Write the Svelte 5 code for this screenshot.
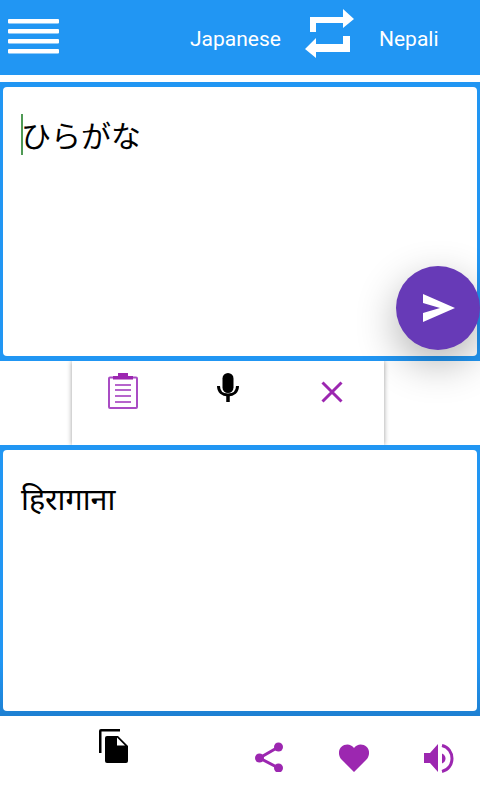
<script>
  let source = $state('ひらがな');
  let target = $state('हिरागाना');
</script>

<div class="screen">
  <header class="topbar">
    <button class="menu" aria-label="Menu">
      <svg width="51" height="35" viewBox="0 0 51 35"><g fill="#fff"><rect y="0" width="51" height="4.500" rx="1"/><rect y="10" width="51" height="4.500" rx="1"/><rect y="20" width="51" height="4.500" rx="1"/><rect y="30" width="51" height="4.500" rx="1"/></g></svg>
    </button>
    <span class="lang from">Japanese</span>
    <svg class="swap" width="50" height="50" viewBox="0 0 50 50"><g fill="#fff"><path d="M5 8H38V0L49 10 38 19V14H11V23H5Z"/><path d="M38 27h7V43H11v6L0 40 11 29v6H38Z"/></g></svg>
    <span class="lang to">Nepali</span>
  </header>

  <section class="panel first">
    <div class="card">
      <div class="input"><i class="caret"></i>{source}</div>
    </div>
    <button class="fab" aria-label="Translate">
      <svg width="32" height="28" viewBox="0 0 32 28"><path fill="#fff" d="M0 0L32 14 0 28V19L17 14 0 9Z"/></svg>
    </button>
  </section>

  <div class="tools-row">
    <div class="tools">
      <svg class="clip" width="30" height="36" viewBox="0 0 30 36"><rect x="1" y="4.500" width="28" height="30.500" rx="1" fill="none" stroke="#a94cc4" stroke-width="2"/><path fill="#9c27b0" d="M5 6.500V3h5V0h10v3h5v3.500z"/><g fill="#b665cc"><rect x="7" y="11" width="16" height="2"/><rect x="7" y="16" width="16" height="2"/><rect x="7" y="22" width="16" height="2"/><rect x="7" y="28" width="16" height="2"/></g></svg>
      <svg class="mic" width="24" height="30" viewBox="0 0 24 30"><rect x="6.500" y="0" width="11" height="20" rx="5.500" fill="#000"/><path d="M2.500 13c0 6 4 9 9.500 9s9.500-3 9.500-9" fill="none" stroke="#000" stroke-width="3"/><rect x="10.250" y="22" width="3.500" height="7" fill="#000"/></svg>
      <svg class="close" width="22" height="22" viewBox="0 0 22 22"><path d="M1.500 1.500l19 19M20.500 1.500l-19 19" stroke="#9c27b0" stroke-width="3" fill="none"/></svg>
    </div>
  </div>

  <section class="panel second">
    <div class="card">
      <div class="output">{target}</div>
    </div>
  </section>

  <footer class="actions">
    <svg class="copy" width="29" height="34" viewBox="0 0 29 34"><path d="M0 24V2a2 2 0 0 1 2-2h19v2.500H2.500V24z" fill="#000"/><path d="M8 7h11l10 10v15a2 2 0 0 1-2 2H8a2 2 0 0 1-2-2V9a2 2 0 0 1 2-2z" fill="#000"/><path d="M18 8.500v8h8z" fill="#fff"/></svg>
    <svg class="share" width="28" height="30" viewBox="0 0 28 30"><g fill="#9c27b0"><circle cx="23.500" cy="5" r="4.500"/><circle cx="4.500" cy="16" r="4.500"/><circle cx="23.500" cy="26" r="4.500"/></g><path d="M23.500 5L4.500 16 23.500 26" fill="none" stroke="#9c27b0" stroke-width="3"/></svg>
    <svg class="heart" width="30" height="28" viewBox="0 0 30 28"><path fill="#9c27b0" d="M15 28L3 16C-1 12-1 6 2.500 2.800 6-.6 12-.5 15 4c3-4.500 9-4.600 12.500-1.200C31 6 31 12 27 16z"/></svg>
    <svg class="speaker" width="30" height="29" viewBox="0 0 30 29"><path fill="#9c27b0" d="M0 9h6l8-9v28l-8-9H0z"/><path d="M18 9.500c2.500 1 3.500 3 3.500 5s-1 4-3.500 5z" fill="#9c27b0"/><path d="M18 1.500c6.500 1.500 10 7 10 13s-3.500 11.500-10 13" fill="none" stroke="#9c27b0" stroke-width="3"/></svg>
  </footer>
</div>

<style>
  :global(body) {
    margin: 0;
    background: #fff;
  }

  .screen {
    width: 480px;
    height: 800px;
    display: flex;
    flex-direction: column;
    overflow: hidden;
    background: #fff;
    font-family: Roboto, "Noto Sans", "Noto Sans CJK JP", sans-serif;
  }

  .topbar {
    height: 75px;
    flex: none;
    box-sizing: border-box;
    background: #2196f3;
    display: flex;
    align-items: flex-start;
    color: #fff;
    font-size: 21px;
  }

  .menu {
    border: 0;
    padding: 0;
    background: none;
    margin-left: 8px;
    margin-top: 19px;
    display: flex;
  }

  .lang {
    margin-top: 27px;
  }

  .from {
    margin-left: 131px;
    width: 115px;
  }

  .swap {
    margin-left: 0;
    margin-top: 9px;
  }

  .to {
    margin-left: 24px;
  }

  .panel {
    flex: none;
    box-sizing: border-box;
    padding: 5px 3px;
    background: #2196f3;
    display: flex;
    position: relative;
  }

  .first {
    margin-top: 7px;
    height: 279px;
  }

  .second {
    height: 271px;
    background: linear-gradient(#2196f3 80%, #1e80d2);
  }

  .card {
    flex: 1;
    background: #fff;
    border-radius: 4px;
  }

  .input {
    padding: 27px 0 0 18px;
    font-size: 30px;
    line-height: 41px;
    color: #000;
    font-family: "Noto Sans CJK JP", sans-serif;
    display: flex;
    position: relative;
  }

  .caret {
    width: 2px;
    height: 41px;
    background: #4f9a55;
    margin-right: -2px;
  }

  .output {
    padding: 28px 0 0 18px;
    font-size: 30.500px;
    line-height: 40px;
    color: #000;
    font-family: "Noto Sans", "Noto Sans Devanagari", sans-serif;
  }

  .fab {
    position: absolute;
    left: 396px;
    top: 184px;
    width: 84px;
    height: 84px;
    padding: 0 0 0 2px;
    border: 0;
    border-radius: 50%;
    background: #673ab7;
    box-shadow: 0 14px 40px rgba(0, 0, 0, 0.3);
    display: flex;
    align-items: center;
    justify-content: center;
    z-index: 2;
  }

  .tools-row {
    height: 84px;
    flex: none;
    padding-left: 72px;
  }

  .tools {
    width: 312px;
    height: 84px;
    background: #fff;
    box-shadow: 0 0 5px rgba(0, 0, 0, 0.4);
    position: relative;
    z-index: 3;
    display: grid;
    grid-template-columns: 104px 104px 104px;
    justify-items: center;
    align-items: start;
    clip-path: inset(0 -8px 0 -8px);
  }

  .clip {
    margin-top: 12px;
    margin-right: 2px;
  }

  .mic {
    margin-top: 12px;
  }

  .close {
    margin-top: 20px;
  }

  .actions {
    flex: 1;
    display: grid;
    grid-template-columns: 99px 30px 126px 30px 54px 30px 55px 30px;
    grid-template-areas: ". a . b . c . d";
    align-items: start;
  }

  .copy {
    grid-area: a;
    margin-top: 13px;
  }

  .share {
    grid-area: b;
    margin-top: 26px;
  }

  .heart {
    grid-area: c;
    margin-top: 28px;
  }

  .speaker {
    grid-area: d;
    margin-top: 28px;
  }
</style>
